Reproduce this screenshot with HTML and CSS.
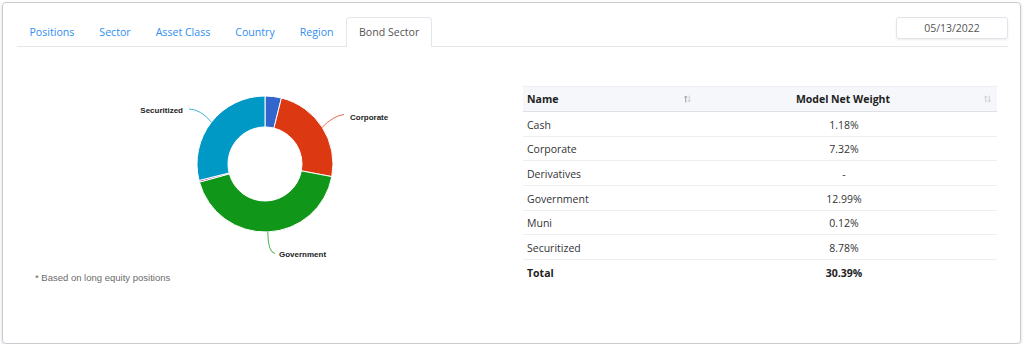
FILE: index.html
```html
<!DOCTYPE html>
<html>
<head>
<meta charset="utf-8">
<link rel="stylesheet" href="styles.css">
</head>
<body>
<div class="card">
  <div class="header">
    <ul class="tabs">
      <li class="tab">Positions</li>
      <li class="tab">Sector</li>
      <li class="tab">Asset Class</li>
      <li class="tab">Country</li>
      <li class="tab">Region</li>
      <li class="tab active">Bond Sector</li>
    </ul>
    <div class="date">05/13/2022</div>
  </div>
  <div class="content">
    <div class="chart-col">
      <svg class="chart" width="495" height="216" viewBox="0 0 495 216">
        <g stroke="#fff" stroke-width="1">
          <path fill="#3366cc" d="M248 41 A68 68 0 0 1 264.43 43.01 L256.94 73.10 A37 37 0 0 0 248 72 Z"/>
          <path fill="#dc3912" d="M264.43 43.01 A68 68 0 0 1 314.82 121.61 L284.36 115.86 A37 37 0 0 0 256.94 73.10 Z"/>
          <path fill="#109618" d="M314.82 121.61 A68 68 0 0 1 182.45 127.09 L212.33 118.84 A37 37 0 0 0 284.36 115.86 Z"/>
          <path fill="#990099" d="M182.45 127.09 A68 68 0 0 1 182.02 125.46 L212.10 117.96 A37 37 0 0 0 212.33 118.84 Z"/>
          <path fill="#0099c6" d="M182.02 125.46 A68 68 0 0 1 248 41 L248 72 A37 37 0 0 0 212.10 117.96 Z"/>
        </g>
        <g fill="none" stroke-width="1" stroke-opacity="0.75">
          <path stroke="#0099c6" d="M194.4 67.1 Q184 54.5 172 54"/>
          <path stroke="#dc3912" d="M305.2 72.3 Q316 61 327 59.5"/>
          <path stroke="#109618" d="M250.8 177 Q251 197.5 258 198.5"/>
        </g>
        <g class="labels">
          <text x="166" y="58" text-anchor="end">Securitized</text>
          <text x="333" y="65">Corporate</text>
          <text x="262" y="202">Government</text>
        </g>
      </svg>
      <div class="note">* Based on long equity positions</div>
    </div>
    <div class="table-col">
      <table class="grid">
        <thead>
          <tr>
            <th class="c-name"><div class="th-in name-in"><span>Name</span>
              <svg class="sort" width="7" height="8" viewBox="0 0 7 8"><path class="dark" d="M1.75 7.5V1M0.5 2.5L1.75 1L3 2.5"/><path d="M5.25 0.5V7M4 5.5L5.25 7L6.5 5.5"/></svg></div></th>
            <th class="c-val"><div class="th-in val-in"><span></span><span class="lbl">Model Net Weight</span>
              <svg class="sort" width="7" height="8" viewBox="0 0 7 8"><path d="M1.75 7.5V1M0.5 2.5L1.75 1L3 2.5"/><path d="M5.25 0.5V7M4 5.5L5.25 7L6.5 5.5"/></svg></div></th>
          </tr>
        </thead>
        <tbody>
          <tr><td class="c-name">Cash</td><td class="c-val">1.18%</td></tr>
          <tr><td class="c-name">Corporate</td><td class="c-val">7.32%</td></tr>
          <tr><td class="c-name">Derivatives</td><td class="c-val">-</td></tr>
          <tr><td class="c-name">Government</td><td class="c-val">12.99%</td></tr>
          <tr><td class="c-name">Muni</td><td class="c-val">0.12%</td></tr>
          <tr><td class="c-name">Securitized</td><td class="c-val">8.78%</td></tr>
          <tr class="total"><td class="c-name">Total</td><td class="c-val">30.39%</td></tr>
        </tbody>
      </table>
    </div>
  </div>
</div>
</body>
</html>
```
FILE: styles.css
```css
html, body {
  margin: 0;
  padding: 0;
  background: #ffffff;
}
body {
  font-family: "Open Sans", "Noto Sans", sans-serif;
  font-size: 10.5px;
  color: #333;
}
.card {
  margin: 2px 0 0 2px;
  width: 1019px;
  height: 342px;
  box-sizing: border-box;
  border: 1px solid #c8ccd1;
  border-radius: 4px;
  box-shadow: 0 1px 3px rgba(0,0,0,0.18);
  padding: 14px 12px 0 14px;
}
.header {
  display: flex;
  align-items: flex-start;
  height: 30px;
  box-sizing: border-box;
  border-bottom: 1px solid #e3e6ea;
}
.tabs {
  display: flex;
  list-style: none;
  margin: 0;
  padding: 0;
}
.tab {
  height: 30px;
  line-height: 30px;
  padding: 0 12.5px;
  border-radius: 4px 4px 0 0;
  color: #2f8ef0;
  font-size: 10.6px;
  box-sizing: border-box;
}
.tab.active {
  color: #555;
  background: #fff;
  padding: 0 12px;
  border: 1px solid #e3e6ea;
  border-bottom: none;
  line-height: 29px;
}
.date {
  margin-left: auto;
  width: 112px;
  height: 22px;
  box-sizing: border-box;
  border: 1px solid #e0e3e7;
  border-radius: 3px;
  box-shadow: 0 1px 2px rgba(0,0,0,0.08);
  text-align: center;
  line-height: 20px;
  font-size: 10.5px;
  color: #555;
}
.content {
  display: flex;
  margin-top: 8px;
}
.chart-col {
  width: 495px;
  flex: none;
}
.chart {
  display: block;
}
.labels text {
  font-family: "Liberation Sans", Arial, sans-serif;
  font-weight: bold;
  font-size: 8px;
  fill: #222;
  stroke: #fff;
  stroke-width: 2px;
  stroke-opacity: 0.8;
  paint-order: stroke;
}
.note {
  padding-left: 18px;
  font-family: "Liberation Sans", Arial, sans-serif;
  font-size: 9.5px;
  line-height: 14px;
  color: #6b6b6b;
}
.table-col {
  flex: 1;
  padding: 31px 11px 0 11px;
}
.grid {
  width: 100%;
  border-collapse: separate;
  border-spacing: 0;
  table-layout: fixed;
}
.grid th {
  height: 24px;
  padding: 0;
  background: #f5f7fa;
  border-top: 1px solid #eceff2;
  border-bottom: 1px solid #dde1e6;
  color: #222;
  font-weight: 700;
  font-size: 10.5px;
}
.grid th.c-name {
  width: 164px;
  padding: 0 4px;
}
.grid th.c-val {
  padding: 0 6px 0 0;
}
.th-in {
  display: grid;
  align-items: center;
}
.name-in {
  grid-template-columns: 1fr auto;
  text-align: left;
}
.val-in {
  grid-template-columns: 12px 1fr 12px;
  text-align: center;
}
.val-in .sort {
  justify-self: end;
}
.sort {
  display: block;
}
.sort path {
  fill: none;
  stroke: #c9ccd0;
  stroke-width: 1;
}
.sort path.dark {
  stroke: #9a9ea3;
}
.grid td {
  height: 21.67px;
  padding: 2px 0 0 0;
  border-bottom: 1px solid #eceef1;
  font-size: 10.5px;
  color: #333;
}
.grid td.c-name {
  padding-left: 4px;
}
.grid td.c-val {
  text-align: center;
  padding-right: 4px;
}
.grid tr.total td {
  border-bottom: none;
  font-weight: 700;
  color: #222;
}
```
